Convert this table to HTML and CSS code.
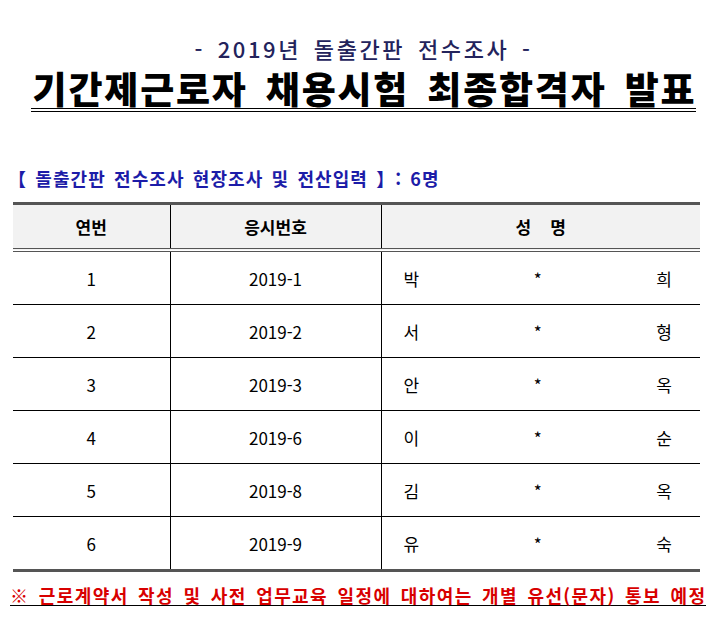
FILE: index.html
```html
<!DOCTYPE html>
<html lang="ko">
<head>
<meta charset="utf-8">
<title>기간제근로자 채용시험 최종합격자 발표</title>
<link rel="stylesheet" href="styles.css">
</head>
<body>
<div class="page">
  <div class="sub">- 2019년 돌출간판 전수조사 -</div>
  <div class="title-wrap"><h1 class="title">기간제근로자 채용시험 최종합격자 발표</h1></div>
  <div class="label">【 돌출간판 전수조사 현장조사 및 전산입력 】: 6명</div>
  <table class="result">
    <colgroup>
      <col class="c1"><col class="c2"><col class="c3">
    </colgroup>
    <thead>
      <tr><th>연번</th><th>응시번호</th><th class="name-h">성&nbsp;&nbsp;&nbsp;&nbsp;명</th></tr>
    </thead>
    <tbody>
      <tr><td>1</td><td>2019-1</td><td><div class="name"><span>박</span><span>*</span><span>희</span></div></td></tr>
      <tr><td>2</td><td>2019-2</td><td><div class="name"><span>서</span><span>*</span><span>형</span></div></td></tr>
      <tr><td>3</td><td>2019-3</td><td><div class="name"><span>안</span><span>*</span><span>옥</span></div></td></tr>
      <tr><td>4</td><td>2019-6</td><td><div class="name"><span>이</span><span>*</span><span>순</span></div></td></tr>
      <tr><td>5</td><td>2019-8</td><td><div class="name"><span>김</span><span>*</span><span>옥</span></div></td></tr>
      <tr><td>6</td><td>2019-9</td><td><div class="name"><span>유</span><span>*</span><span>숙</span></div></td></tr>
    </tbody>
  </table>
  <div class="note">※ 근로계약서 작성 및 사전 업무교육 일정에 대하여는 개별 유선(문자) 통보 예정</div>
</div>
</body>
</html>
```

FILE: styles.css
```css
html, body {
  margin: 0;
  padding: 0;
  background: #ffffff;
}
body {
  font-family: "Noto Sans CJK KR", "Noto Sans", sans-serif;
  color: #000;
}
.page {
  width: 717px;
  height: 622px;
  overflow: hidden;
}
.sub {
  margin-top: 35px;
  text-align: center;
  font-size: 22px;
  line-height: 26px;
  font-weight: 500;
  color: #23235c;
  letter-spacing: 2.6px;
  word-spacing: 4px;
  padding-left: 10px;
}
.title-wrap {
  text-align: center;
  padding-left: 10px;
}
.title {
  display: inline-block;
  margin: 8px 0 0 0;
  font-size: 37px;
  line-height: 38px;
  font-weight: 900;
  letter-spacing: 1.8px;
  word-spacing: 6px;
  border-bottom: 4px double #000;
  padding: 0 0 1px 2px;
}
.label {
  margin: 55px 0 0 8px;
  font-size: 18px;
  line-height: 22px;
  font-weight: 700;
  color: #1c1ca8;
  letter-spacing: 1.1px;
  word-spacing: 2px;
}
.result {
  margin: 13px 0 0 13px;
  width: 687px;
  border-collapse: collapse;
  table-layout: fixed;
  font-size: 17px;
}
.c1 { width: 157px; }
.c2 { width: 211px; }
.c3 { width: 319px; }
.result th {
  background: #f2f2f2;
  font-weight: 700;
  height: 43px;
  padding: 0;
  border-top: 3px solid #555;
  border-bottom: 4px double #555;
  border-left: 1px solid #000;
}
.result td {
  height: 52px;
  padding: 0;
  text-align: center;
  border-bottom: 1px solid #000;
  border-left: 1px solid #000;
}
.result th:first-child,
.result td:first-child {
  border-left: none;
}
.result tbody tr:last-child td {
  border-bottom: 3px solid #555;
}
.name {
  display: flex;
  justify-content: space-between;
  padding: 0 28px 0 22px;
}
.note {
  display: inline-block;
  margin: 13px 0 0 10px;
  font-size: 18px;
  line-height: 20px;
  font-weight: 700;
  color: #d80000;
  letter-spacing: 1.4px;
  word-spacing: 3px;
  border-bottom: 1px solid #000;
}
```
